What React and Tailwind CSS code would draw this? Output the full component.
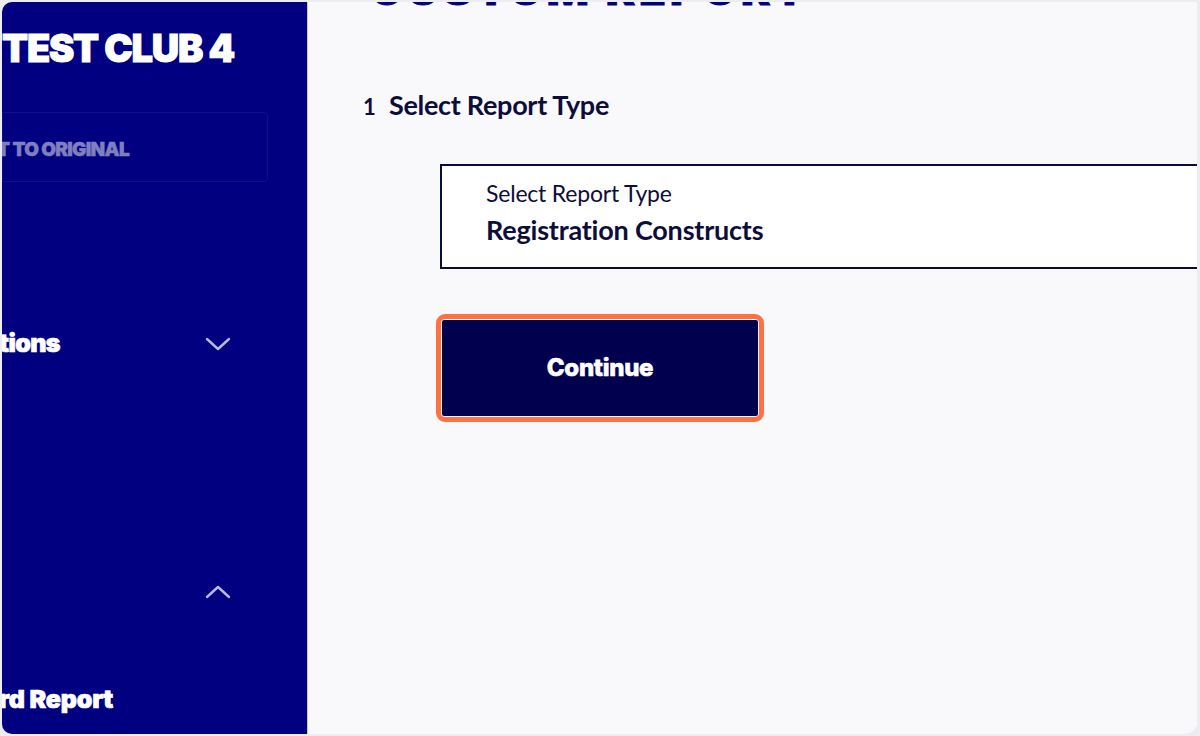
import React from "react";

function ChevronDown() {
  return (
    <svg width="26" height="16" viewBox="0 0 26 16" fill="none">
      <path d="M2 3 L13 13 L24 3" stroke="#b9b9dc" strokeWidth="2.4" strokeLinecap="round" strokeLinejoin="round" />
    </svg>
  );
}
function ChevronUp() {
  return (
    <svg width="26" height="16" viewBox="0 0 26 16" fill="none">
      <path d="M2 13 L13 3 L24 13" stroke="#b9b9dc" strokeWidth="2.4" strokeLinecap="round" strokeLinejoin="round" />
    </svg>
  );
}

const heavy = { fontFamily: "Inter, 'Noto Sans', sans-serif" };

export default function App() {
  return (
    <div className="w-[1200px] h-[736px] bg-[#ededf1] p-[2px]" style={{ fontFamily: "Lato, 'Noto Sans', sans-serif" }}>
      <div className="flex h-full w-full overflow-hidden rounded-l-[10px] rounded-br-[14px]">
        <aside className="w-[305px] shrink-0 bg-[#000080] overflow-hidden flex flex-col text-white" style={heavy}>
          <div className="pt-[22px] h-[110px]">
            <div className="text-[38px] font-black leading-[48px] whitespace-nowrap tracking-[-1.2px] [-webkit-text-stroke:1px_white]">TEST CLUB 4</div>
          </div>
          <div className="h-[70px] w-[266px] border border-white/[0.06] rounded-r-[4px] flex items-center pt-[6px]">
            <span className="text-[19px] font-black tracking-[-0.7px] text-[#7f7fc0] whitespace-nowrap ml-[-6px] [-webkit-text-stroke:0.5px_#7f7fc0]">T TO ORIGINAL</span>
          </div>
          <div className="mt-[148px] flex items-center justify-between w-[229px] h-[28px]">
            <span className="text-[25px] font-black tracking-[-0.6px] ml-[-3px] [-webkit-text-stroke:0.7px_white]">tions</span>
            <ChevronDown />
          </div>
          <div className="mt-[220px] flex items-center justify-end w-[229px] h-[28px]">
            <ChevronUp />
          </div>
          <div className="mt-[80px] h-[28px] flex items-center">
            <span className="text-[25px] font-black tracking-[-0.2px] ml-[-3px] whitespace-nowrap [-webkit-text-stroke:0.7px_white]">rd Report</span>
          </div>
        </aside>
        <div className="w-px bg-[#c4c4da] shrink-0" />
        <main className="flex-1 bg-[#f9f9fb] overflow-hidden border-r border-[#ececf0]">
          <div className="mt-[-35px] pl-[62px] h-[40px]">
            <div className="text-[44px] font-black leading-[44px] text-[#000080] whitespace-nowrap tracking-[4px] [-webkit-text-stroke:1px_#000080]" style={heavy}>CUSTOM REPORT</div>
          </div>
          <div className="mt-[78px] pl-[55px] flex items-baseline text-[#0d0d3a]">
            <span className="text-[22px] font-bold w-[26px]">1</span>
            <span className="text-[27px] font-bold tracking-[-0.3px]">Select Report Type</span>
          </div>
          <div className="mt-[38px] ml-[132px] w-[800px] h-[105px] bg-white border-2 border-[#0b0b3a] pl-[44px] pt-[12px] text-[#0d0d3a]">
            <div className="text-[23px] leading-[30px] tracking-[-0.2px]">Select Report Type</div>
            <div className="text-[27px] font-bold leading-[34px] mt-[5px] tracking-[-0.2px]">Registration Constructs</div>
          </div>
          <div className="mt-[45px] ml-[128px] w-[328px] h-[108px] rounded-[9px] border-[5px] border-[#ff7043] p-px">
            <button className="w-full h-full bg-[#00004f] rounded-[2px] text-white text-[24px] font-extrabold tracking-[-0.3px] flex items-center justify-center [-webkit-text-stroke:0.6px_white]" style={heavy}>
              Continue
            </button>
          </div>
        </main>
      </div>
    </div>
  );
}
